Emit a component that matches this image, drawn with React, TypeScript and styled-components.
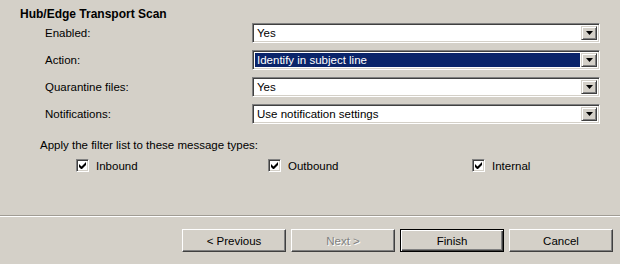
import React from "react";
import styled, { createGlobalStyle, css } from "styled-components";

const Global = createGlobalStyle`
  html, body { margin: 0; padding: 0; background: #d4d0c8; }
  * { box-sizing: border-box; }
`;

const Page = styled.div`
  width: 620px;
  height: 264px;
  background: #d4d0c8;
  font-family: "Liberation Sans", Arial, sans-serif;
  font-size: 11.5px;
  color: #000;
  display: flex;
  flex-direction: column;
  overflow: hidden;
`;

const Content = styled.div`
  flex: 1;
  display: flex;
  flex-direction: column;
`;

const Title = styled.div`
  font-weight: bold;
  font-size: 12px;
  line-height: 14px;
  padding: 7px 0 0 20px;
  margin-bottom: 2px;
`;

const Form = styled.div`
  display: flex;
  flex-direction: column;
  gap: 7px;
  padding-left: 45px;
`;

const Row = styled.div`
  display: grid;
  grid-template-columns: 207px 348px;
  align-items: center;
  height: 20px;
`;

const Label = styled.span`
  line-height: 14px;
`;

const Select = styled.div`
  height: 20px;
  display: flex;
  align-items: stretch;
  background: #fff;
  border-style: solid;
  border-width: 1px;
  border-color: #808080 #fff #fff #808080;
  box-shadow: inset 1px 1px 0 #404040, inset -1px -1px 0 #d4d0c8;
  padding: 2px;
`;

const Value = styled.div<{ $selected?: boolean }>`
  flex: 1;
  display: flex;
  align-items: center;
  padding-left: 2px;
  margin-right: 1px;
  line-height: 14px;
  ${(p) =>
    p.$selected &&
    css`
      background: #0a246a;
      color: #fff;
    `}
`;

const DropButton = styled.div`
  width: 16px;
  display: flex;
  align-items: center;
  justify-content: center;
  background: #d4d0c8;
  border-style: solid;
  border-width: 1px;
  border-color: #d4d0c8 #404040 #404040 #d4d0c8;
  box-shadow: inset 1px 1px 0 #fff, inset -1px -1px 0 #808080;
`;

const Arrow = () => (
  <svg width="7" height="4" viewBox="0 0 7 4">
    <path d="M0 0H7L3.5 4Z" fill="#000" />
  </svg>
);

const FilterText = styled.div`
  line-height: 14px;
  margin: 14px 0 0 40px;
`;

const Checks = styled.div`
  display: flex;
  align-items: center;
  margin: 7px 0 0 76px;
  height: 13px;
`;

const CheckItem = styled.label<{ $w?: number }>`
  display: flex;
  align-items: center;
  gap: 7px;
  width: ${(p) => (p.$w ? `${p.$w}px` : "auto")};
  line-height: 14px;
`;

const Box = styled.span`
  width: 13px;
  height: 13px;
  background: #fff;
  border-style: solid;
  border-width: 1px;
  border-color: #808080 #fff #fff #808080;
  box-shadow: inset 1px 1px 0 #404040, inset -1px -1px 0 #d4d0c8;
  display: flex;
  align-items: center;
  justify-content: center;
`;

const Check = () => (
  <svg width="7" height="7" viewBox="0 0 7 7">
    <path d="M0 2v3l2 2h1l4-4V0L2.5 4.5Z" fill="#000" />
  </svg>
);

const Footer = styled.div`
  height: 49px;
  border-top: 1px solid #a09c94;
  box-shadow: inset 0 1px 0 #fff;
  display: flex;
  justify-content: flex-end;
  align-items: flex-start;
  gap: 5px;
  padding: 13px 7px 0 0;
`;

const Button = styled.div<{ $default?: boolean; $disabled?: boolean }>`
  width: 104px;
  height: 23px;
  display: flex;
  align-items: center;
  justify-content: center;
  background: #d4d0c8;
  border-style: solid;
  border-width: 1px;
  border-color: #fff #404040 #404040 #fff;
  box-shadow: inset -1px -1px 0 #808080;
  ${(p) =>
    p.$default &&
    css`
      border: 1px solid #000;
      box-shadow: inset 1px 1px 0 #fff, inset -1px -1px 0 #404040,
        inset -2px -2px 0 #808080;
    `}
  ${(p) =>
    p.$disabled &&
    css`
      color: #808080;
      text-shadow: 1px 1px 0 #fff;
    `}
`;

const rows = [
  { label: "Enabled:", value: "Yes" },
  { label: "Action:", value: "Identify in subject line", selected: true },
  { label: "Quarantine files:", value: "Yes" },
  { label: "Notifications:", value: "Use notification settings" },
];

export default function App() {
  return (
    <Page>
      <Global />
      <Content>
        <Title>Hub/Edge Transport Scan</Title>
        <Form>
          {rows.map((r) => (
            <Row key={r.label}>
              <Label>{r.label}</Label>
              <Select>
                <Value $selected={r.selected}>{r.value}</Value>
                <DropButton>
                  <Arrow />
                </DropButton>
              </Select>
            </Row>
          ))}
        </Form>
        <FilterText>Apply the filter list to these message types:</FilterText>
        <Checks>
          <CheckItem $w={192}>
            <Box>
              <Check />
            </Box>
            Inbound
          </CheckItem>
          <CheckItem $w={204}>
            <Box>
              <Check />
            </Box>
            Outbound
          </CheckItem>
          <CheckItem>
            <Box>
              <Check />
            </Box>
            Internal
          </CheckItem>
        </Checks>
      </Content>
      <Footer>
        <Button>&lt; Previous</Button>
        <Button $disabled>Next &gt;</Button>
        <Button $default>Finish</Button>
        <Button>Cancel</Button>
      </Footer>
    </Page>
  );
}
